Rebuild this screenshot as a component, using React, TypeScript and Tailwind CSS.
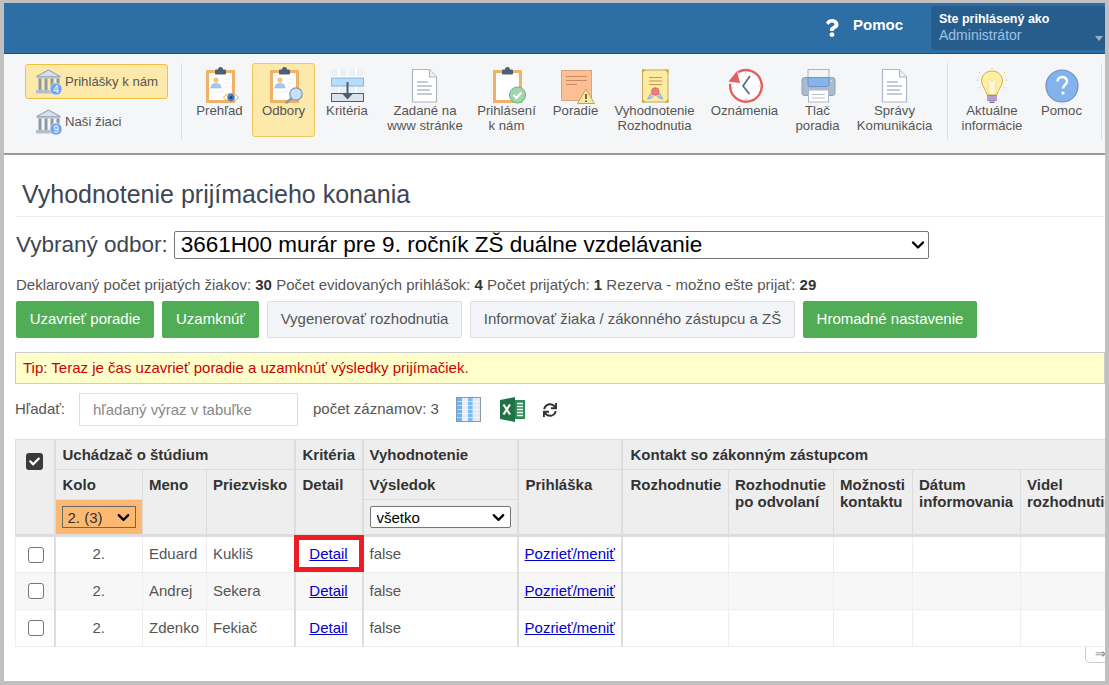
import type { ReactNode } from 'react';
import { FaQuestion, FaSync, FaCheck } from 'react-icons/fa';
import { ChevronDown } from 'lucide-react';

const Clipboard = ({ person = true }: { person?: boolean }) => (
  <>
    <rect x="7.5" y="4.5" width="26" height="30" fill="#fff" stroke="#f0b266" strokeWidth="3" />
    <rect x="15" y="2.5" width="11" height="5" rx="1" fill="#4e5f78" />
    <circle cx="20.5" cy="2.5" r="2.5" fill="#4e5f78" />
    {person && (
      <>
        <circle cx="16" cy="13" r="2.5" fill="#f5c26b" />
        <path d="M11 21c0-3.5 2-4.5 5-4.5s5 1 5 4.5z" fill="#a5c8f0" stroke="#7fa8d8" strokeWidth=".5" />
        <path d="M23 12h7M23 16h7M23 20h7M11 25h12" stroke="#eef0f3" strokeWidth="1" />
      </>
    )}
  </>
);

const PrehladIcon = () => (
  <svg viewBox="0 0 40 38" className="h-[38px] w-[40px]">
    <Clipboard />
    <path d="M23.5 30.5c4-5.500 11-5.500 15 0-4 5.500-11 5.500-15 0z" fill="#fff" stroke="#d9a94f" strokeWidth="1" />
    <circle cx="31" cy="30.500" r="3.800" fill="#4d7fc0" />
    <circle cx="31" cy="30.500" r="1.500" fill="#27406a" />
  </svg>
);

const OdboryIcon = () => (
  <svg viewBox="0 0 40 38" className="h-[38px] w-[40px]">
    <Clipboard />
    <path d="M27.500 31.500l-5 4" stroke="#8a97a8" strokeWidth="2.500" strokeLinecap="round" />
    <circle cx="32" cy="27" r="6.200" fill="#c5e0f8" stroke="#7d97b3" strokeWidth="1.200" />
  </svg>
);

const KriteriaIcon = () => (
  <svg viewBox="0 0 40 38" className="h-[38px] w-[40px]">
    <rect x="4" y="2" width="33" height="33" fill="#eaf0f7" />
    <path d="M12 2v33M20.500 2v33M29 2v33M4 10h33" stroke="#fff" strokeWidth="1.500" />
    <rect x="4.500" y="11" width="32" height="8" fill="#b6defc" stroke="#8db6d6" />
    <rect x="4.500" y="26.500" width="32" height="8" fill="#dbe4ec" stroke="#4d5e72" />
    <path d="M20.500 15v14" stroke="#4d5e72" strokeWidth="2" />
    <path d="M15.500 27h10l-5 5.500z" fill="#4d5e72" />
  </svg>
);

const DocIcon = () => (
  <svg viewBox="0 0 40 38" className="h-[38px] w-[40px]">
    <path d="M7.500 2.500h17l7 7.500v25h-24z" fill="#fff" stroke="#aab8c8" strokeWidth="1.200" />
    <path d="M24.500 2.500v7.500h7" fill="#eef2f6" stroke="#aab8c8" strokeWidth="1.200" />
    <path d="M12 15h11M12 19h15M12 23h13M12 27h15" stroke="#b3bcc8" strokeWidth="1.300" />
  </svg>
);

const PrihlaseniIcon = () => (
  <svg viewBox="0 0 40 38" className="h-[38px] w-[40px]">
    <Clipboard person={false} />
    <circle cx="30.500" cy="28" r="8" fill="#a3d5ae" stroke="#68b37a" strokeWidth="1" />
    <path d="M26.500 28l3 3 5-5.500" fill="none" stroke="#fff" strokeWidth="2" />
  </svg>
);

const PoradieIcon = () => (
  <svg viewBox="0 0 40 38" className="h-[38px] w-[40px]">
    <rect x="5.500" y="3.500" width="30" height="30" fill="#fdbf94" stroke="#d8a381" strokeWidth="1" />
    <path d="M10 9.500h21M10 13.500h21M10 17.500h11" stroke="#c98a62" strokeWidth="1.200" />
    <path d="M30 22l8.500 14.500h-17z" fill="#fbe7a0" stroke="#c9a54a" strokeWidth="1" />
    <path d="M30 27v5M30 33.500v1.500" stroke="#4a4a4a" strokeWidth="1.600" />
  </svg>
);

const VyhodnotenieIcon = () => (
  <svg viewBox="0 0 40 38" className="h-[38px] w-[40px]">
    <rect x="7.500" y="3" width="25.500" height="32" fill="#fdeba0" stroke="#c8a75a" strokeWidth="1" />
    <path d="M7 2.500h4l-4 4zM33.500 2.500h-4l4 4zM7 35.500h4l-4-4zM33.500 35.500h-4l4-4z" fill="#c8a75a" />
    <path d="M14 10.500h13M14 14h13M14 17.500h13" stroke="#bd9a50" strokeWidth="1.100" />
    <path d="M16 26l-3.500 6 4-1 2-2M24.500 26l3.500 6-4-1-2-2" fill="#a8cdf0" stroke="#6f9fd0" strokeWidth=".7" />
    <circle cx="20.300" cy="24.500" r="3.800" fill="#ef7b7b" stroke="#c95f5f" strokeWidth=".7" />
  </svg>
);

const OznameniaIcon = () => (
  <svg viewBox="0 0 40 38" className="h-[38px] w-[40px]">
    <circle cx="21" cy="19" r="15" fill="#fff" />
    <path d="M13 5.300A15.800 15.800 0 1 1 5.300 17" fill="none" stroke="#e46060" strokeWidth="2.400" />
    <path d="M3.500 14.500L12 4l3 12z" fill="#e46060" />
    <path d="M25 9l-7 10 6.500 8" fill="none" stroke="#5c7089" strokeWidth="1.800" />
    <path d="M21 5v1.500M21 31.500V33M33.500 19H35M7 21h1.500" stroke="#b9c3cf" strokeWidth="1" />
  </svg>
);

const TlacIcon = () => (
  <svg viewBox="0 0 40 38" className="h-[38px] w-[40px]">
    <rect x="10" y="2.500" width="21" height="15" fill="#f2f5f8" stroke="#a9b7c6" />
    <path d="M6.500 10.500h28a2.500 2.500 0 0 1 2.500 2.500v13a2.500 2.500 0 0 1-2.500 2.500h-28a2.500 2.500 0 0 1-2.500-2.500v-13a2.500 2.500 0 0 1 2.500-2.500z" fill="#a9bbd0" stroke="#8ba0b8" />
    <path d="M10 10.500h21v7a2 2 0 0 1-2 2h-17a2 2 0 0 1-2-2z" fill="#86b4ec" stroke="#6d93c0" />
    <circle cx="33.500" cy="14" r="1" fill="#f6e08a" />
    <rect x="10.500" y="23" width="20" height="12" fill="#fff" stroke="#a9b7c6" />
    <path d="M14 27.500h13M14 31h13" stroke="#b7c1cd" strokeWidth="1" />
  </svg>
);

const BulbIcon = () => (
  <svg viewBox="0 0 40 38" className="h-[38px] w-[40px]">
    <path d="M20 4c6.500 0 10.500 4.500 10.500 10 0 6-5 8-5.500 14h-10c-.5-6-5.500-8-5.500-14C9.500 8.500 13.500 4 20 4z" fill="#feef9f" stroke="#cfae58" strokeWidth="1" />
    <path d="M17 27v-11l-2-3h3l2 2 2-2h3l-2 3v11" fill="#fff9dc" stroke="#f0dfa0" strokeWidth=".8" />
    <rect x="15" y="28" width="10" height="6" rx="1" fill="#9c87bc" />
    <path d="M15 30h10M15 32h10" stroke="#e0d8ea" strokeWidth=".7" />
    <path d="M17.500 34.500h5v1.500h-5z" fill="#7d6b9c" />
    <path d="M7 5l1 1M33 5l-1 1M5 13h1.500M35 13h-1.500M6.500 21l1-.7M33.500 21l-1-.7M20 1v1" stroke="#d9b95c" strokeWidth="1" />
  </svg>
);

const PomocIcon = () => (
  <svg viewBox="0 0 40 38" className="h-[38px] w-[40px]">
    <circle cx="20" cy="19" r="16" fill="#84b3ec" stroke="#6a94c6" strokeWidth="1.200" />
    <path d="M15.500 14.500c0-6 9.500-6 9.500-.3 0 3.500-4 3.800-4 7.300" fill="none" stroke="#fff" strokeWidth="2.400" />
    <circle cx="21" cy="26" r="1.600" fill="#fff" />
  </svg>
);

const BankIcon = ({ count }: { count: string }) => (
  <svg viewBox="0 0 28 28" className="h-[28px] w-[28px] shrink-0">
    <path d="M1.500 8.500L13.500 2l12 6.500z" fill="#d5e0ec" stroke="#8b99a8" strokeWidth="1" />
    <rect x="2" y="8.500" width="23" height="2" fill="#b7c3d0" />
    <path d="M5 10.500v11.500M11 10.500v11.500M17 10.500v11.500M23 10.500v11.500" stroke="#8b99a8" strokeWidth="3" />
    <rect x="1" y="22" width="25" height="3.500" fill="#b4bfcb" />
    <circle cx="21" cy="21" r="6" fill="#6fa4ea" stroke="#d7e5f8" strokeWidth=".8" />
    <text x="21" y="24.500" textAnchor="middle" fontSize="10" fontWeight="700" fill="#d8e7fb" fontFamily="Liberation Sans">{count}</text>
  </svg>
);

type ToolbarItem = { lines: string[]; icon: ReactNode; width: string; active?: boolean };

const mainItems: ToolbarItem[] = [
  { lines: ['Prehľad'], icon: <PrehladIcon />, width: 'w-[65px]' },
  { lines: ['Odbory'], icon: <OdboryIcon />, width: 'w-[63px]', active: true },
  { lines: ['Kritéria'], icon: <KriteriaIcon />, width: 'w-[64px]' },
  { lines: ['Zadané na', 'www stránke'], icon: <DocIcon />, width: 'w-[92px]' },
  { lines: ['Prihlásení', 'k nám'], icon: <PrihlaseniIcon />, width: 'w-[71px]' },
  { lines: ['Poradie'], icon: <PoradieIcon />, width: 'w-[67px]' },
  { lines: ['Vyhodnotenie', 'Rozhodnutia'], icon: <VyhodnotenieIcon />, width: 'w-[91px]' },
  { lines: ['Oznámenia'], icon: <OznameniaIcon />, width: 'w-[89px]' },
  { lines: ['Tlač', 'poradia'], icon: <TlacIcon />, width: 'w-[57px]' },
  { lines: ['Správy', 'Komunikácia'], icon: <DocIcon />, width: 'w-[97px]' },
];

const infoItems: ToolbarItem[] = [
  { lines: ['Aktuálne', 'informácie'], icon: <BulbIcon />, width: 'w-[80px]' },
  { lines: ['Pomoc'], icon: <PomocIcon />, width: 'w-[59px]' },
];

function ToolButton({ item }: { item: ToolbarItem }) {
  return (
    <div
      className={`flex h-[74px] shrink-0 flex-col items-center rounded-[3px] border pt-[3px] text-center text-[13.2px] leading-[15px] text-[#555] ${item.width} ${
        item.active ? 'border-[#f3c558] bg-[#fde9a9]' : 'border-transparent'
      }`}
    >
      {item.icon}
      <div className="-mt-[2px] whitespace-nowrap">
        {item.lines.map((line) => (
          <div key={line}>{line}</div>
        ))}
      </div>
    </div>
  );
}

const Separator = () => <div className="mx-[4px] h-[77px] w-px shrink-0 bg-[#dddddd]" />;

const stats: [string, string][] = [
  ['Deklarovaný počet prijatých žiakov:', '30'],
  ['Počet evidovaných prihlášok:', '4'],
  ['Počet prijatých:', '1'],
  ['Rezerva - možno ešte prijať:', '29'],
];

const actions = [
  { label: 'Uzavrieť poradie', green: true, width: 'w-[138px]' },
  { label: 'Uzamknúť', green: true, width: 'w-[97px]' },
  { label: 'Vygenerovať rozhodnutia', green: false, width: 'w-[195px]' },
  { label: 'Informovať žiaka / zákonného zástupcu a ZŠ', green: false, width: 'w-[325px]' },
  { label: 'Hromadné nastavenie', green: true, width: 'w-[174px]' },
];

const rows = [
  { name: 'Eduard', surname: 'Kukliš' },
  { name: 'Andrej', surname: 'Sekera' },
  { name: 'Zdenko', surname: 'Fekiač' },
];

const th = 'border border-[#dddddd] px-[6px] align-top text-left font-bold text-[15px] leading-[17px] text-[#333]';
const thick = 'border-l-2 pl-[7px]';
const td = 'h-[37px] border border-[#eeeeee] px-[6px] text-[15px] text-[#555]';
const tdThick = 'border-l-2 border-l-[#dddddd]';

function App() {
  return (
    <div className="h-[685px] w-[1109px] overflow-hidden border-x-4 border-t-[3px] border-b-4 border-[#c0c0c0] bg-white font-['Liberation_Sans',Arial,sans-serif]">
      <header className="flex h-[51px] items-center justify-end border-b border-[#1f4f78] bg-[#2d6ea4]">
        <FaQuestion className="mr-[13px] h-[18px] text-white" />
        <span className="mr-[28px] -mt-[6px] text-[15px] font-bold text-white">Pomoc</span>
        <div className="relative h-[44px] w-[174px] rounded-[3px] bg-[#275d8c] pl-[8px] pt-[5px]">
          <div className="text-[12.5px] font-bold leading-[16px] text-white">Ste prihlásený ako</div>
          <div className="text-[14px] leading-[16px] text-[#9cc4e8]">Administrátor</div>
          <span className="absolute right-[2px] top-[30px] border-x-[4px] border-t-[5px] border-x-transparent border-t-[#9fb0c0]" />
        </div>
      </header>

      <nav className="flex h-[101px] items-start border-b-2 border-[#9a9a9a] bg-[#f5f6f8] pl-[21px] pt-[9px]">
        <div className="mr-[13px] w-[143px] shrink-0 pt-px">
          <div className="flex h-[35px] items-center gap-[2px] rounded-[3px] border border-[#f3c03f] bg-[#fde9a9] pl-[9px] text-[13.2px] text-[#555]">
            <BankIcon count="4" />
            Prihlášky k nám
          </div>
          <div className="mt-[5px] flex h-[35px] items-center gap-[2px] border border-transparent pl-[9px] text-[13.2px] text-[#555]">
            <BankIcon count="9" />
            Naši žiaci
          </div>
        </div>
        <div className="mr-[5px] h-[77px] w-px shrink-0 bg-[#dddddd]" />
        {mainItems.map((item) => (
          <ToolButton key={item.lines[0]} item={item} />
        ))}
        <Separator />
        {infoItems.map((item) => (
          <ToolButton key={item.lines[0]} item={item} />
        ))}
        <div className="ml-[10px] h-[77px] w-px shrink-0 bg-[#dddddd]" />
      </nav>

      <main className="pl-[11px]">
        <h1 className="ml-[7px] mt-[23px] text-[25px] font-normal leading-[32px] text-[#3d4654]">Vyhodnotenie prijímacieho konania</h1>
        <hr className="ml-px mt-[6px] border-[#eeeeee]" />

        <div className="ml-px mt-[14px] flex items-center">
          <label className="mr-[6px] text-[22.5px] leading-[28px] text-[#3d4654]">Vybraný odbor:</label>
          <div className="relative">
            <select className="block h-[28px] w-[755px] appearance-none rounded-[2px] border border-[#767676] bg-white pl-[6px] text-[22.5px] leading-[26px] text-black">
              <option>3661H00 murár pre 9. ročník ZŠ duálne vzdelávanie</option>
            </select>
            <ChevronDown size={20} strokeWidth={2.8} className="pointer-events-none absolute right-[1px] top-[4px] text-black" />
          </div>
        </div>

        <p className="ml-px mt-[17px] text-[15px] leading-[18px] text-[#555]">
          {stats.map(([label, value]) => (
            <span key={label}>
              {label} <b className="text-[#333]">{value}</b>{' '}
            </span>
          ))}
        </p>

        <div className="ml-px mt-[7px] flex gap-[8px]">
          {actions.map((a) => (
            <button
              key={a.label}
              className={`h-[37px] rounded-[2px] border text-[15px] ${a.width} ${
                a.green ? 'border-[#4cae4c] bg-[#50ad55] text-white' : 'border-[#dddddd] bg-[#f4f5f8] text-[#555]'
              }`}
            >
              {a.label}
            </button>
          ))}
        </div>

        <div className="mt-[14px] flex h-[32px] items-center border border-[#cccccc] bg-[#ffffcc] pl-[7px] text-[15px] text-[#cc0000]">
          Tip: Teraz je čas uzavrieť poradie a uzamknúť výsledky prijímačiek.
        </div>

        <div className="mt-[9px] flex h-[33px] items-center text-[15px] text-[#555]">
          <span className="w-[64px]">Hľadať:</span>
          <input
            placeholder="hľadaný výraz v tabuľke"
            className="h-[33px] w-[219px] border border-[#dddddd] pl-[13px] text-[15px] placeholder:text-[#888]"
          />
          <span className="ml-[15px]">počet záznamov: 3</span>
          <svg viewBox="0 0 25 25" className="ml-[17px] h-[25px] w-[25px]">
            <rect width="25" height="25" fill="#dfe6ee" />
            <rect x="0" width="6" height="25" fill="#6db2f5" />
            <rect x="12" width="5" height="25" fill="#7cbcf5" />
            <rect x="6" width="6" height="25" fill="#eaedf1" />
            <path d="M0 4.500h25M0 8.500h25M0 12.500h25M0 16.500h25M0 20.500h25M17 0v25M21 0v25" stroke="#fff" strokeWidth=".8" opacity=".7" />
            <rect x=".5" y=".5" width="24" height="24" fill="none" stroke="#8a9aae" />
          </svg>
          <svg viewBox="0 0 25 25" className="ml-[19px] h-[25px] w-[25px]">
            <path d="M0 3l15-3v25L0 22z" fill="#217346" />
            <rect x="15" y="3" width="10" height="19" fill="#2f8a58" />
            <path d="M17 6.500h6M17 9.500h6M17 12.500h6M17 15.500h6M17 18.500h6" stroke="#fff" strokeWidth="1.300" />
            <path d="M3.500 7.500l6.500 10M10 7.500l-6.500 10" stroke="#fff" strokeWidth="2.200" />
          </svg>
          <FaSync className="ml-[18px] h-[14px] w-[14px] text-[#333]" />
        </div>

        <div className="mt-[13px] overflow-hidden">
          <table className="w-[1160px] table-fixed border-collapse">
            <colgroup>
              <col className="w-[39px]" />
              <col className="w-[88px]" />
              <col className="w-[64px]" />
              <col className="w-[88px]" />
              <col className="w-[68px]" />
              <col className="w-[155px]" />
              <col className="w-[104px]" />
              <col className="w-[107px]" />
              <col className="w-[105px]" />
              <col className="w-[79px]" />
              <col className="w-[108px]" />
              <col className="w-[155px]" />
            </colgroup>
            <thead className="bg-[#eeeeee]">
              <tr className="h-[30px]">
                <th rowSpan={3} className={`${th} pt-[13px] !pl-[10px]`}>
                  <span className="flex h-[17px] w-[17px] items-center justify-center rounded-[3px] bg-[#3a3a3a]">
                    <FaCheck className="h-[11px] w-[11px] text-white" />
                  </span>
                </th>
                <th colSpan={3} className={`${th} ${thick} !align-middle`}>Uchádzač o štúdium</th>
                <th className={`${th} ${thick} !align-middle`}>Kritéria</th>
                <th className={`${th} ${thick} !pl-[6px] !align-middle`}>Vyhodnotenie</th>
                <th className={`${th} ${thick}`} />
                <th colSpan={5} className={`${th} ${thick} !pl-[8px] !align-middle`}>Kontakt so zákonným zástupcom</th>
              </tr>
              <tr className="h-[30px]">
                <th className={`${th} ${thick} !align-middle`}>Kolo</th>
                <th rowSpan={2} className={`${th} pt-[6px]`}>Meno</th>
                <th rowSpan={2} className={`${th} pt-[6px]`}>Priezvisko</th>
                <th rowSpan={2} className={`${th} ${thick} pt-[6px]`}>Detail</th>
                <th className={`${th} ${thick} !pl-[6px] !align-middle`}>Výsledok</th>
                <th rowSpan={2} className={`${th} ${thick} pt-[6px]`}>Prihláška</th>
                <th rowSpan={2} className={`${th} ${thick} !pl-[8px] pt-[6px]`}>Rozhodnutie</th>
                <th rowSpan={2} className={`${th} pt-[6px]`}>Rozhodnutie<br />po odvolaní</th>
                <th rowSpan={2} className={`${th} pt-[6px]`}>Možnosti<br />kontaktu</th>
                <th rowSpan={2} className={`${th} pt-[6px]`}>Dátum<br />informovania</th>
                <th rowSpan={2} className={`${th} pt-[6px]`}>Videl<br />rozhodnutie</th>
              </tr>
              <tr className="h-[36px] border-b-[3px] border-b-[#dddddd]">
                <th className={`${th} ${thick} !pl-[6px] !align-middle bg-[#fdb871]`}>
                  <div className="relative w-[74px]">
                    <select className="block h-[22px] w-[74px] appearance-none border border-[#666] bg-[#fdb871] pl-[5px] text-[15px] font-normal text-[#333]">
                      <option>2. (3)</option>
                    </select>
                    <ChevronDown size={19} strokeWidth={2.8} className="pointer-events-none absolute right-[3px] top-[2px] text-black" />
                  </div>
                </th>
                <th className={`${th} ${thick} !pl-[6px] !align-middle`}>
                  <div className="relative w-[141px]">
                    <select className="block h-[22px] w-[141px] appearance-none rounded-[2px] border border-[#767676] bg-white pl-[6px] text-[15px] font-normal text-black">
                      <option>všetko</option>
                    </select>
                    <ChevronDown size={19} strokeWidth={2.8} className="pointer-events-none absolute right-[3px] top-[2px] text-black" />
                  </div>
                </th>
              </tr>
            </thead>
            <tbody>
              {rows.map((r, i) => (
                <tr key={r.name} className={i === 1 ? 'bg-[#f7f7f7]' : 'bg-white'}>
                  <td className={`${td} text-center`}>
                    <input type="checkbox" className="block h-[16px] w-[16px] translate-x-[6px] appearance-none rounded-[3px] border border-[#767676] bg-white" />
                  </td>
                  <td className={`${td} ${tdThick} text-center`}>2.</td>
                  <td className={td}>{r.name}</td>
                  <td className={td}>{r.surname}</td>
                  <td className={`${td} ${tdThick} relative text-center`}>
                    <a href="#" className="text-[#0000cc] underline">Detail</a>
                    {i === 0 && <span className="absolute -left-[2px] -top-[2px] bottom-0 -right-[2px] border-[5px] border-[#ed1c24]" />}
                  </td>
                  <td className={`${td} ${tdThick}`}>false</td>
                  <td className={`${td} ${tdThick} whitespace-nowrap`}>
                    <a href="#" className="text-[#0000cc] underline">Pozrieť/meniť</a>
                  </td>
                  <td className={`${td} ${tdThick}`} />
                  <td className={td} />
                  <td className={td} />
                  <td className={td} />
                  <td className={td} />
                </tr>
              ))}
            </tbody>
          </table>
        </div>

        <div className="flex justify-end">
          <span className="h-[16px] w-[20px] rounded-bl-[5px] border-b border-l border-[#cccccc] pl-[9px] text-[13px] leading-[14px] text-[#888]">⇒</span>
        </div>
      </main>
    </div>
  );
}

export default App;
